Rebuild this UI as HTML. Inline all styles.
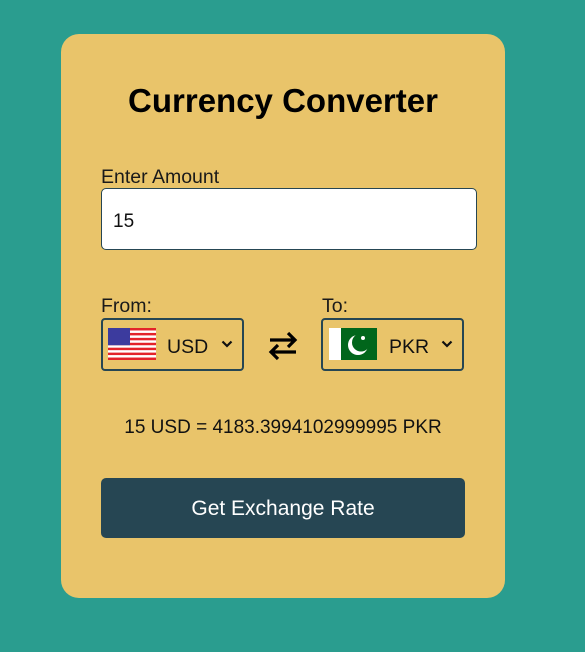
<!DOCTYPE html>
<html><head><meta charset="utf-8"><style>
*{box-sizing:border-box;margin:0;padding:0}
body{width:585px;height:652px;background:#2a9d8f;position:relative;overflow:hidden;font-family:"Liberation Sans",sans-serif;color:#111}
.card{position:absolute;left:61px;top:34px;width:444px;height:564px;background:#e9c46a;border-radius:18px}
.abs{position:absolute}
h1{position:absolute;left:0;width:444px;top:48px;text-align:center;font-size:33px;font-weight:bold;color:#000}
.lbl{font-size:19.5px;color:#1a1a1a}
.input{left:40px;top:154px;width:376px;height:62px;background:#fff;border:1px solid #264653;border-radius:5px;font-size:19px;padding:22px 0 0 11px}
.sel{width:143px;height:53px;border:2px solid #264653;border-radius:4px}
.btn{left:40px;top:444px;width:364px;height:60px;background:#264653;border-radius:5px;color:#fff;font-size:21px;text-align:center;line-height:62px}
</style></head><body>
<div class="card">
<h1>Currency Converter</h1>
<div class="abs lbl" style="left:40px;top:132px">Enter Amount</div>
<div class="abs input">15</div>
<div class="abs lbl" style="left:40px;top:261px">From:</div>
<div class="abs lbl" style="left:261px;top:261px">To:</div>
<div class="abs sel" style="left:40px;top:284px">
<svg class="abs" style="left:5px;top:8px" width="48" height="32" viewBox="0 0 48 26" preserveAspectRatio="none">
<rect width="48" height="26" fill="#fff"/>
<g fill="#e3232a"><rect y="0" width="48" height="2"/><rect y="4" width="48" height="2"/><rect y="8" width="48" height="2"/><rect y="12" width="48" height="2"/><rect y="16" width="48" height="2"/><rect y="20" width="48" height="2"/><rect y="24" width="48" height="2"/></g>
<rect width="22" height="14" fill="#3c3b9e"/>
</svg>
<div class="abs" style="left:64px;top:16px;font-size:19.5px">USD</div>
<svg class="abs" style="left:118px;top:20px" width="12" height="8" viewBox="0 0 12 8"><path d="M1.5 1.5L6 6l4.5-4.5" stroke="#111" stroke-width="2.2" fill="none"/></svg>
</div>
<svg class="abs" style="left:207px;top:296px" width="30" height="32" viewBox="0 0 30 32"><path d="M2 10h25M20 3l7 7-7 7M28 22H3M10 15l-7 7 7 7" stroke="#000" stroke-width="3.2" fill="none"/></svg>
<div class="abs sel" style="left:260px;top:284px">
<svg class="abs" style="left:6px;top:8px" width="48" height="32" viewBox="0 0 48 32">
<rect width="48" height="32" fill="#fff"/><rect x="12" width="36" height="32" fill="#01661b"/>
<circle cx="29" cy="17" r="10" fill="#fff"/><circle cx="32" cy="14.5" r="9" fill="#01661b"/>
<circle cx="34" cy="10" r="2" fill="#fff"/>
</svg>
<div class="abs" style="left:66px;top:16px;font-size:19.5px">PKR</div>
<svg class="abs" style="left:118px;top:20px" width="12" height="8" viewBox="0 0 12 8"><path d="M1.5 1.5L6 6l4.5-4.5" stroke="#111" stroke-width="2.2" fill="none"/></svg>
</div>
<div class="abs" style="left:0;width:444px;top:383px;text-align:center;font-size:19px">15 USD = 4183.3994102999995 PKR</div>
<div class="abs btn">Get Exchange Rate</div>
</div>
</body></html>
